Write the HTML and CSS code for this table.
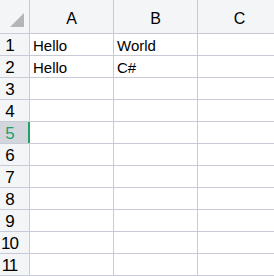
FILE: index.html
```html
<!DOCTYPE html>
<html>
<head>
<meta charset="utf-8">
<link rel="stylesheet" href="styles.css">
</head>
<body>
<div class="sheet">
  <div class="corner"><span class="tri"></span></div>
  <div class="colhead">A</div>
  <div class="colhead">B</div>
  <div class="colhead">C</div>

  <div class="rowhead"><span class="num">1</span></div><div class="cell">Hello</div><div class="cell">World</div><div class="cell"></div>
  <div class="rowhead"><span class="num">2</span></div><div class="cell">Hello</div><div class="cell">C#</div><div class="cell"></div>
  <div class="rowhead"><span class="num">3</span></div><div class="cell"></div><div class="cell"></div><div class="cell"></div>
  <div class="rowhead"><span class="num">4</span></div><div class="cell"></div><div class="cell"></div><div class="cell"></div>
  <div class="rowhead active"><span class="num">5</span></div><div class="cell selected"></div><div class="cell"></div><div class="cell"></div>
  <div class="rowhead"><span class="num">6</span></div><div class="cell"></div><div class="cell"></div><div class="cell"></div>
  <div class="rowhead"><span class="num">7</span></div><div class="cell"></div><div class="cell"></div><div class="cell"></div>
  <div class="rowhead"><span class="num">8</span></div><div class="cell"></div><div class="cell"></div><div class="cell"></div>
  <div class="rowhead"><span class="num">9</span></div><div class="cell"></div><div class="cell"></div><div class="cell"></div>
  <div class="rowhead"><span class="num">10</span></div><div class="cell"></div><div class="cell"></div><div class="cell"></div>
  <div class="rowhead"><span class="num">11</span></div><div class="cell"></div><div class="cell"></div><div class="cell"></div>
</div>
</body>
</html>
```
FILE: styles.css
```css
html, body {
  margin: 0;
  padding: 0;
  background: #ffffff;
  overflow: hidden;
}
.sheet {
  display: grid;
  grid-template-columns: 29px 83px 83px 83px;
  grid-template-rows: 33px repeat(11, 21px);
  gap: 1px;
  padding-bottom: 1px;
  width: max-content;
  background: #c8cad6;
  font-family: "Liberation Sans", Arial, sans-serif;
  color: #000;
}
.corner {
  background: #f4f5f7;
  position: relative;
}
.tri {
  position: absolute;
  left: 10px;
  top: 13px;
  width: 0;
  height: 0;
  border-left: 14px solid transparent;
  border-bottom: 14px solid #b5b5b5;
}
.colhead {
  background: #f4f5f7;
  text-align: center;
  font-size: 16px;
  line-height: 33px;
  padding-top: 2px;
  box-sizing: border-box;
}
.rowhead {
  background: #f4f5f7;
  font-size: 17px;
  line-height: 21px;
  box-sizing: border-box;
  padding-top: 1px;
}
.num {
  display: block;
  width: 18px;
  text-align: center;
  letter-spacing: -1px;
  text-indent: 1px;
}
.rowhead.active {
  background: #d3d6dc;
  color: #21a06a;
}
.cell {
  background: #ffffff;
  font-size: 15px;
  line-height: 21px;
  padding: 1px 0 0 3px;
  box-sizing: border-box;
  white-space: nowrap;
}
.cell.selected {
  box-shadow: -2px 0 0 0 #1fa463;
}
```
